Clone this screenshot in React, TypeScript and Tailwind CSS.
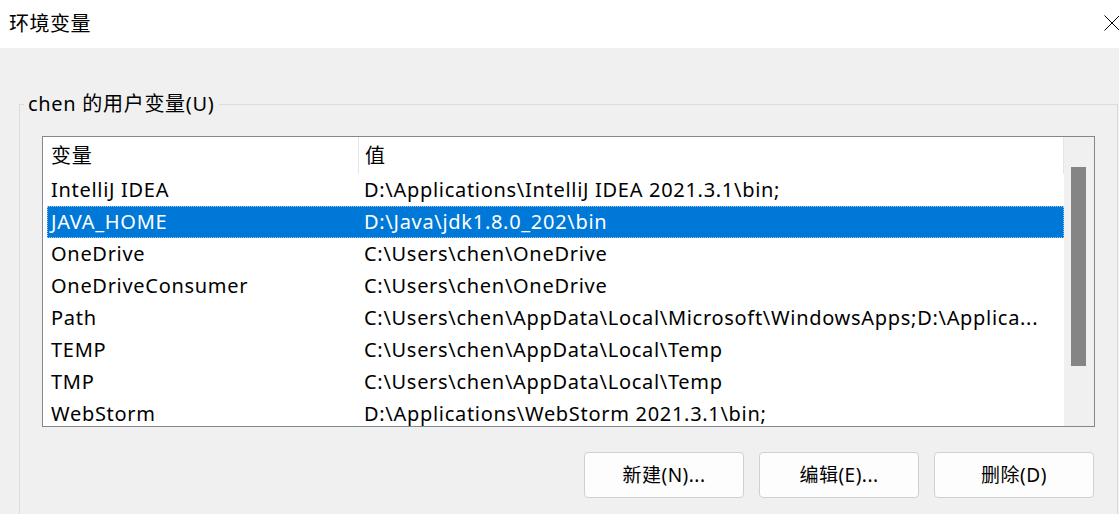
const rows = [
  { name: "IntelliJ IDEA", value: "D:\\Applications\\IntelliJ IDEA 2021.3.1\\bin;" },
  { name: "JAVA_HOME", value: "D:\\Java\\jdk1.8.0_202\\bin", selected: true },
  { name: "OneDrive", value: "C:\\Users\\chen\\OneDrive" },
  { name: "OneDriveConsumer", value: "C:\\Users\\chen\\OneDrive" },
  {
    name: "Path",
    value: "C:\\Users\\chen\\AppData\\Local\\Microsoft\\WindowsApps;D:\\Applica...",
  },
  { name: "TEMP", value: "C:\\Users\\chen\\AppData\\Local\\Temp" },
  { name: "TMP", value: "C:\\Users\\chen\\AppData\\Local\\Temp" },
  { name: "WebStorm", value: "D:\\Applications\\WebStorm 2021.3.1\\bin;" },
];

export default function App() {
  return (
    <div
      className="w-[1119px] h-[514px] overflow-hidden flex flex-col bg-[#f0f0f0] text-black text-[20px] tracking-[0.7px]"
      style={{ fontFamily: '"Noto Sans", "Noto Sans CJK SC", sans-serif' }}
    >
      {/* 标题栏 */}
      <div className="h-[48px] shrink-0 bg-white flex items-center justify-between pl-[9px]">
        <span className="text-[20px] leading-none tracking-[0.5px]">环境变量</span>
        <svg width="16" height="16" viewBox="0 0 16 16" className="mr-[-1px] mb-[3px]">
          <path d="M0.5 0.5 L15.5 15.5 M15.5 0.5 L0.5 15.5" stroke="#000" strokeWidth="1" fill="none" />
        </svg>
      </div>

      {/* 用户变量 */}
      <fieldset className="ml-[19px] mr-[1px] mt-[44px] border border-[#dcdcdc] pl-[22px] pr-[22px] min-h-[480px] shrink-0">
        <legend className="ml-[-18px] px-[4px] leading-[24px]">chen 的用户变量(U)</legend>

        <div className="mt-[20px] h-[291px] border border-[#828790] bg-white flex">
          <div className="flex-1 min-w-0 pl-[4px] overflow-hidden">
            <div className="flex h-[37px] items-center">
              <div className="w-[311px] pl-[4px]">变量</div>
              <div className="flex-1 h-full flex items-center border-l border-r border-[#e5e5e5] pl-[6px]">值</div>
            </div>
            {rows.map((r) => (
              <div
                key={r.name}
                className={
                  r.selected
                    ? "flex h-[32px] items-center bg-[#0078d7] text-white outline-1 outline-dotted outline-offset-[-1px] outline-[#9fc6ee]"
                    : "flex h-[32px] items-center"
                }
              >
                <div className="w-[311px] pl-[4px] whitespace-nowrap">{r.name}</div>
                <div className="flex-1 pl-[6px] whitespace-nowrap">{r.value}</div>
              </div>
            ))}
          </div>
          <div className="w-[30px] shrink-0 bg-[#f0f0f0] pl-[7px] pt-[30px]">
            <div className="w-[15px] h-[199px] bg-[#858585]" />
          </div>
        </div>

        <div className="mt-[25px] flex justify-end gap-[15px] mr-[1px]">
          {["新建(N)...", "编辑(E)...", "删除(D)"].map((t) => (
            <button
              key={t}
              className="w-[160px] h-[46px] bg-[#fdfdfd] border border-[#d0d0d0] rounded-[4px] text-[19px] tracking-[0.5px]"
            >
              {t}
            </button>
          ))}
        </div>
      </fieldset>
    </div>
  );
}
